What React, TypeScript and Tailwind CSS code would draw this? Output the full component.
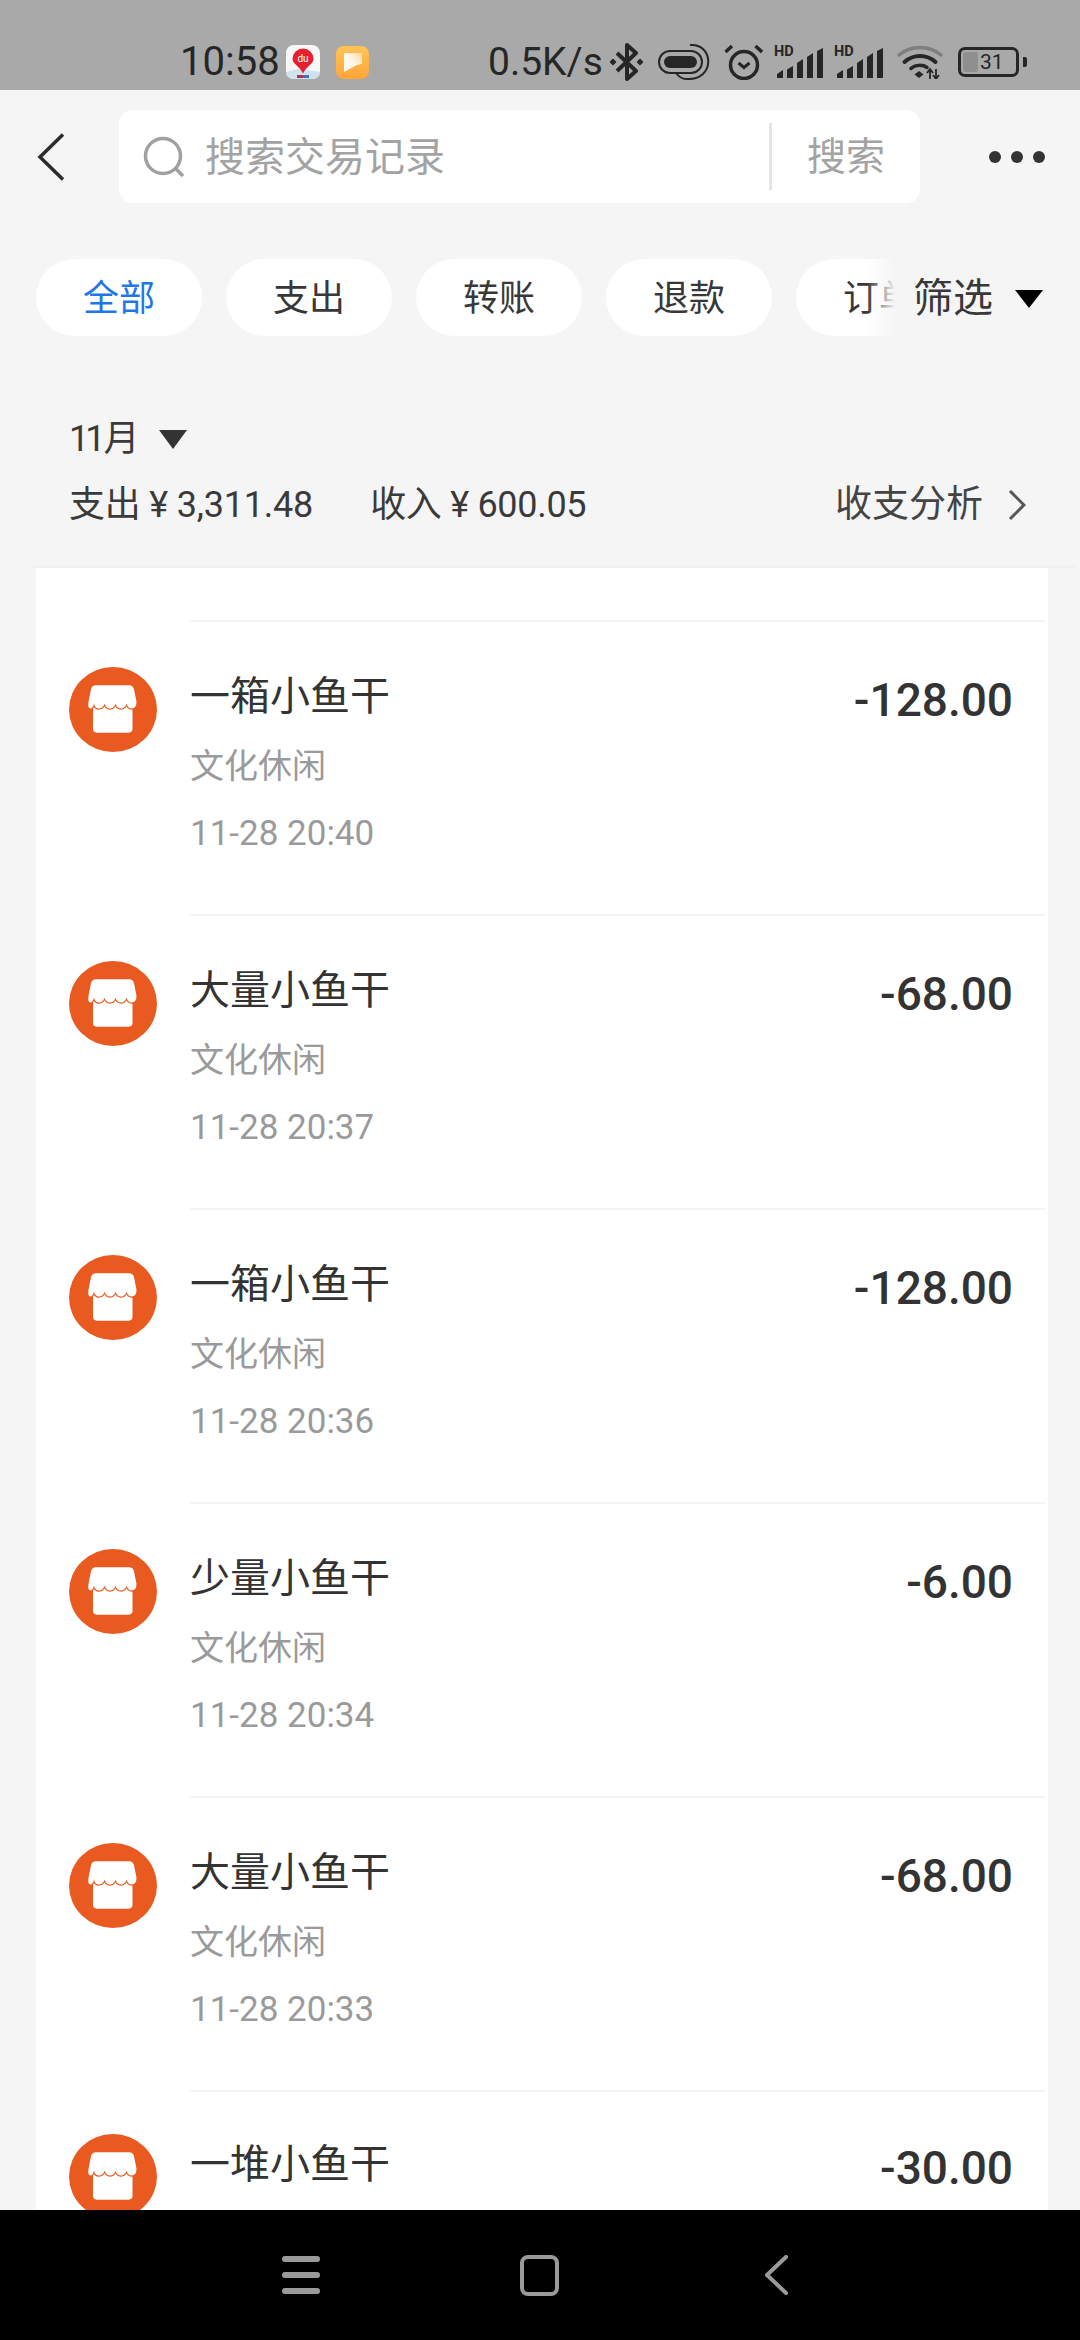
const rows = [
  { title: '一箱小鱼干', amount: '-128.00', sub: '文化休闲', time: '11-28 20:40' },
  { title: '大量小鱼干', amount: '-68.00', sub: '文化休闲', time: '11-28 20:37' },
  { title: '一箱小鱼干', amount: '-128.00', sub: '文化休闲', time: '11-28 20:36' },
  { title: '少量小鱼干', amount: '-6.00', sub: '文化休闲', time: '11-28 20:34' },
  { title: '大量小鱼干', amount: '-68.00', sub: '文化休闲', time: '11-28 20:33' },
  { title: '一堆小鱼干', amount: '-30.00', sub: '', time: '' },
];

const chips = ['全部', '支出', '转账', '退款', '订单'];

function ShopIcon() {
  return (
    <svg viewBox="0 0 88 88" preserveAspectRatio="none" className="w-[88px] h-[85px] shrink-0">
      <circle cx="44" cy="44" r="44" fill="#e95a20" />
      <rect x="24" y="34" width="39.500" height="34" rx="4" fill="#fff" />
      <path
        d="M27 19h33q4 0 5 4l2.500 13q0 7-5 7-3.500 0-5-5-1.500 5-5.500 5t-5.500-5q-1.500 5-5.500 5t-5.500-5q-1.500 5-5.500 5t-5-5q-1.500 5-3.500 5-3 0-2-7l2.500-13q1-4 5-4z"
        fill="#fff"
        stroke="#e95a20"
        strokeWidth="2.500"
        paintOrder="stroke"
      />
    </svg>
  );
}

function Signal() {
  return (
    <div className="relative w-[50px] h-[32px] shrink-0">
      <span className="absolute left-0 top-[-3px] text-[14.5px] leading-[17px] font-bold">HD</span>
      <svg viewBox="0 0 50 32" className="w-[50px] h-[32px]" fill="#262626">
        <path d="M3 32v-4l6-4v8z" />
        <path d="M13 32v-8.500l6-3.500v12z" />
        <path d="M23 32V17l6-4v19z" />
        <path d="M33 32V11l6-4v25z" />
        <path d="M43 32V5l6-3v30z" />
      </svg>
    </div>
  );
}

function StatusBar() {
  return (
    <div className="h-[90px] shrink-0 bg-[#a9a9a9] pl-[180px] pt-[42px] text-[#262626] font-['Roboto',sans-serif]">
      <div className="h-[40px] flex items-center">
        <span className="w-[106px] shrink-0 text-[40px] leading-[40px] whitespace-nowrap">10:58</span>
        <svg viewBox="0 0 34 34" className="w-[34px] h-[34px] shrink-0">
          <rect width="34" height="34" rx="8" fill="#f7f7f7" />
          <path d="M0 27l12-3 22 3v-1 0q0 8-8 8H8q-8 0-8-7z" fill="#cfe3ee" />
          <path d="M17 3.500a10.500 10.500 0 0 1 10.500 10.500c0 5-7 7-10.500 14.500C13.500 21 6.500 19 6.500 14A10.500 10.500 0 0 1 17 3.500z" fill="#e8202e" />
          <text x="17" y="17" textAnchor="middle" fontSize="10" fill="#fff" fontFamily="Roboto, sans-serif">du</text>
          <rect x="11" y="30" width="6" height="3" fill="#b03050" />
          <rect x="17" y="30" width="6" height="3" fill="#4472b8" />
        </svg>
        <div className="ml-[16px] w-[33px] h-[33px] shrink-0 rounded-[8px] bg-gradient-to-b from-[#ffc455] to-[#ffa53a] flex items-center justify-center">
          <svg viewBox="0 0 20 20" className="w-[20px] h-[20px]">
            <defs>
              <linearGradient id="sheet" x1="0" y1="1" x2="1" y2="0">
                <stop offset="0.5" stopColor="#fff8ec" />
                <stop offset="1" stopColor="#fbd79a" />
              </linearGradient>
            </defs>
            <path d="M1 1h18v11q-5 0-9 3l-9 5z" fill="url(#sheet)" />
          </svg>
        </div>
        <span className="ml-[119px] w-[121px] shrink-0 text-[39px] leading-[40px] whitespace-nowrap">0.5K/s</span>

        {/* bluetooth */}
        <svg viewBox="0 0 35 38" className="w-[35px] h-[38px] shrink-0" fill="none" stroke="#262626" strokeWidth="4" strokeLinejoin="round">
          <path d="M8 10l19 18-9 8V2l9 8-19 18" />
          <path d="M4 16.500L6.500 19 4 21.500 1.500 19z" fill="#262626" strokeWidth="1.500" />
          <path d="M31 16.500l2.500 2.500-2.500 2.500-2.500-2.500z" fill="#262626" strokeWidth="1.500" />
        </svg>

        {/* link */}
        <svg viewBox="0 0 53 36" className="ml-[14px] w-[53px] h-[36px] shrink-0" fill="none">
          <rect x="6" y="12" width="33" height="12" rx="6" fill="#262626" />
          <rect x="1" y="7" width="43" height="22" rx="11" stroke="#262626" strokeWidth="2" />
          <path d="M32 1c24-2 26 36-4 34-4 0-7-2-10-6" stroke="#262626" strokeWidth="2" />
        </svg>

        {/* alarm */}
        <svg viewBox="0 0 39 36" className="ml-[13px] w-[39px] h-[36px] shrink-0" fill="none" stroke="#262626">
          <circle cx="20" cy="21" r="13.500" strokeWidth="3.500" />
          <path d="M14.500 19l5.500 4.500 5.500-4.500" strokeWidth="3" />
          <path d="M1.500 8L8 2M38 8l-6.500-6" strokeWidth="3.500" />
        </svg>

        <div className="ml-[11px]"><Signal /></div>
        <div className="ml-[10px]"><Signal /></div>

        {/* wifi */}
        <svg viewBox="0 0 46 34" className="ml-[13px] w-[46px] h-[34px] shrink-0" fill="none" strokeLinecap="round">
          <path d="M2 10C14 0 32 0 44 10" stroke="#7f7f7f" strokeWidth="3.500" />
          <path d="M7.500 17c9-8 22-8 31 0" stroke="#262626" strokeWidth="4" />
          <path d="M14 23.500c4-4 12-4 16-1" stroke="#262626" strokeWidth="3.500" />
          <path d="M22 26l4.500 3.500L22 33l-4.500-3.500z" fill="#262626" />
          <path d="M33 34v-9m-3 3l3-4 3 4" stroke="#262626" strokeWidth="1.800" strokeLinecap="butt" />
          <path d="M39 24v9m-3-3l3 4 3-4" stroke="#262626" strokeWidth="1.800" strokeLinecap="butt" />
        </svg>

        {/* battery */}
        <div className="ml-[15px] w-[61px] h-[30px] shrink-0 rounded-[7px] border-[3px] border-[#262626] flex items-center pl-[2px] py-[2px]">
          <span className="w-[15px] h-full bg-[#8f8f8f] rounded-[2px] shrink-0" />
          <span className="ml-[2px] text-[21px] leading-[20px]">31</span>
        </div>
        <span className="ml-[4px] w-[4px] h-[10px] bg-[#262626] rounded-r-[2px] shrink-0" />
      </div>
    </div>
  );
}

export default function App() {
  return (
    <div className="w-[1080px] h-[2340px] flex flex-col overflow-hidden bg-[#f5f5f5] font-['Roboto','Noto_Sans_CJK_SC',sans-serif]">
      <StatusBar />

      {/* Search */}
      <div className="h-[113px] shrink-0 flex items-end">
        <div className="w-[119px] h-[93px] flex items-center pl-[37px]">
          <svg viewBox="0 0 28 48" className="w-[28px] h-[48px]" fill="none" stroke="#2b2b2b" strokeWidth="3.500">
            <path d="M26 1.500L3 24l23 22.500" />
          </svg>
        </div>
        <div className="w-[801px] h-[93px] bg-white rounded-[14px] flex items-center">
          <svg viewBox="0 0 42 42" className="ml-[24px] w-[42px] h-[42px]" fill="none" stroke="#a0a0a0" strokeWidth="3.500">
            <circle cx="20" cy="20" r="17.500" />
            <path d="M32 32l8 8" />
          </svg>
          <span className="ml-[20px] flex-1 pt-[2px] text-[40px] text-[#a3a3a3]">搜索交易记录</span>
          <div className="w-[3px] h-[67px] bg-[#e4e4e4]" />
          <span className="w-[148px] pt-[2px] text-center text-[39px] text-[#a3a3a3]">搜索</span>
        </div>
        <div className="h-[93px] flex items-center gap-[10px] pl-[69px]">
          <span className="w-[12px] h-[12px] rounded-full bg-[#333]" />
          <span className="w-[12px] h-[12px] rounded-full bg-[#333]" />
          <span className="w-[12px] h-[12px] rounded-full bg-[#333]" />
        </div>
      </div>

      {/* Chips */}
      <div className="relative h-[77px] mt-[56px] shrink-0 overflow-hidden">
        <div className="flex gap-[24px] pl-[36px]">
          {chips.map((c, i) => (
            <div
              key={c}
              className={
                i === 0
                  ? 'w-[166px] h-[77px] pt-[2px] rounded-full bg-white flex items-center justify-center text-[36px] text-[#1f76e6] shrink-0'
                  : 'w-[166px] h-[77px] pt-[2px] rounded-full bg-white flex items-center justify-center text-[36px] text-[#383838] shrink-0'
              }
            >
              {c}
            </div>
          ))}
        </div>
        <div className="absolute right-0 top-0 bottom-0 flex items-center">
          <div className="w-[28px] h-full bg-gradient-to-r from-transparent to-[#f5f5f5]" />
          <div className="w-[185px] h-full bg-[#f5f5f5] flex items-center pl-[18px] pt-[2px] text-[40px] text-[#383838]">
            筛选
            <span className="ml-[22px] w-0 h-0 border-x-[14px] border-x-transparent border-t-[18px] border-t-black" />
          </div>
        </div>
      </div>

      {/* Month summary */}
      <div className="h-[232px] shrink-0 ml-[33px] mr-[5px] pl-[36px] pr-[49px] pt-[73px] text-[#3a3a3a] border-b-2 border-[#f0f0f0]">
        <div className="flex items-center text-[36px] leading-[60px]">
          <span className="tracking-[-4px]">11</span>
          <span className="ml-[2px]">月</span>
          <span className="ml-[20px] w-0 h-0 border-x-[14px] border-x-transparent border-t-[19px] border-t-[#333]" />
        </div>
        <div className="flex items-center text-[36px] leading-[60px] mt-[6px]">
          <span className="tracking-[-0.2px]">支出 ¥ 3,311.48</span>
          <span className="ml-[57px] tracking-[-0.3px]">收入 ¥ 600.05</span>
          <span className="ml-auto text-[37px] text-[#444]">收支分析</span>
          <svg viewBox="0 0 18 32" className="ml-[25px] w-[18px] h-[32px]" fill="none" stroke="#555" strokeWidth="3">
            <path d="M2 2l14 14L2 30" />
          </svg>
        </div>
      </div>

      {/* List */}
      <div className="flex-1 min-h-0 overflow-hidden ml-[36px] w-[1012px] bg-white pt-[52px]">
        {rows.map((r, i) => (
          <div key={i} className="h-[294px] flex">
            <div className={i === 5 ? 'w-[154px] shrink-0 pl-[33px] pt-[44px]' : 'w-[154px] shrink-0 pl-[33px] pt-[47px]'}>
              <ShopIcon />
            </div>
            <div className="flex-1 border-t-2 border-[#f3f3f3] flex justify-between pr-[32px] mr-[3px]">
              <div className={i === 5 ? 'pt-[45px]' : 'pt-[47px]'}>
                <div className="text-[40px] leading-[56px] text-[#333]">{r.title}</div>
                {r.sub && <div className="text-[34px] leading-[50px] mt-[16px] text-[#9a9a9a]">{r.sub}</div>}
                {r.time && <div className="text-[35px] leading-[50px] mt-[18px] text-[#9a9a9a]">{r.time}</div>}
              </div>
              <div className={i === 5 ? 'pt-[48px] text-[46px] leading-[56px] font-medium text-[#333]' : 'pt-[50px] text-[46px] leading-[56px] font-medium text-[#333]'}>
                {r.amount}
              </div>
            </div>
          </div>
        ))}
      </div>

      {/* Nav bar */}
      <div className="h-[130px] shrink-0 bg-black flex items-center">
        <div className="ml-[282px] flex flex-col gap-[10px] w-[38px]">
          <span className="h-[6px] rounded-full bg-[#9a9a9a]" />
          <span className="h-[6px] rounded-full bg-[#9a9a9a]" />
          <span className="h-[6px] rounded-full bg-[#9a9a9a]" />
        </div>
        <div className="ml-[200px] w-[39px] h-[41px] rounded-[8px] border-[4px] border-[#9a9a9a]" />
        <svg viewBox="0 0 26 40" className="ml-[204px] w-[26px] h-[40px]" fill="none" stroke="#9a9a9a" strokeWidth="4" strokeLinecap="round" strokeLinejoin="round">
          <path d="M23 2L4 20l19 18" />
        </svg>
      </div>
    </div>
  );
}
